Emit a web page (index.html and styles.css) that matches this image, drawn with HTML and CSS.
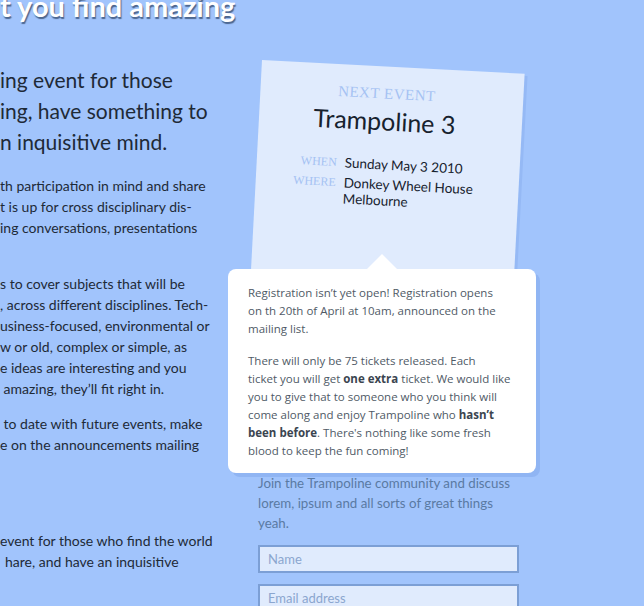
FILE: index.html
```html
<!DOCTYPE html>
<html lang="en">
<head>
<meta charset="utf-8">
<title>Trampoline</title>
<link rel="stylesheet" href="styles.css">
</head>
<body>
<div class="page">
  <main class="intro-col">
    <h1 class="title">t you find amazing</h1>
    <p class="lead">ing event for those<br>ing, have something to<br>n inquisitive mind.</p>
    <p class="body">th participation in mind and share<br>t is up for cross disciplinary dis-<br>ing conversations, presentations<br>&nbsp;</p>
    <p class="body">s to cover subjects that will be<br>, across different disciplines. Tech-<br>usiness-focused, environmental or<br>w or old, complex or simple, as<br>e ideas are interesting and you<br>&nbsp;amazing, they’ll fit right in.</p>
    <p class="body">&nbsp;to date with future events, make<br>e on the announcements mailing<br>&nbsp;</p>
    <p class="body section">event for those who find the world<br><span class="nudge">hare, and have an inquisitive</span></p>
  </main>
  <aside class="side-col">
    <section class="event-card">
      <div class="event-kicker">NEXT EVENT</div>
      <div class="event-name">Trampoline 3</div>
      <dl class="event-meta">
        <dt>WHEN</dt><dd>Sunday May 3 2010</dd>
        <dt>WHERE</dt><dd>Donkey Wheel House<br>Melbourne</dd>
      </dl>
    </section>
    <div class="popover">
      <p>Registration isn’t yet open! Registration opens<br>on th 20th of April at 10am, announced on the<br>mailing list.</p>
      <p>There will only be 75 tickets released. Each<br>ticket you will get <strong>one extra</strong> ticket. We would like<br>you to give that to someone who you think will<br>come along and enjoy Trampoline who <strong>hasn’t</strong><br><strong>been before</strong>. There's nothing like some fresh<br>blood to keep the fun coming!</p>
    </div>
    <div class="join">
      <p class="join-text">Join the Trampoline community and discuss lorem, ipsum and all sorts of great things yeah.</p>
      <input class="field" type="text" placeholder="Name">
      <input class="field" type="text" placeholder="Email address">
    </div>
  </aside>
</div>
</body>
</html>
```

FILE: styles.css
```css
html, body {
  margin: 0;
  padding: 0;
}
body {
  background: #a1c4fc;
  font-family: Lato, "Open Sans", sans-serif;
  color: #1e2a37;
  overflow: hidden;
}
.page {
  width: 644px;
  height: 606px;
  overflow: hidden;
  display: flex;
  align-items: flex-start;
}
.intro-col {
  width: 215px;
  flex: none;
  white-space: nowrap;
}
.title {
  margin: -10px 0 0 0;
  font-size: 29px;
  line-height: 32px;
  font-weight: 700;
  color: #ffffff;
  text-shadow: 1px 2px 1px rgba(20, 40, 70, 0.6);
}
.lead {
  margin: 42px 0 18px 0;
  font-size: 21px;
  line-height: 31px;
}
.body {
  margin: 0 0 14px 0;
  font-size: 14px;
  line-height: 21px;
}
.section {
  margin-top: 54px;
}
.nudge {
  padding-left: 5px;
}
.side-col {
  margin-left: 13px;
  width: 320px;
  flex: none;
}
.event-card {
  margin: 60px 0 0 34px;
  width: 263px;
  height: 225px;
  box-sizing: border-box;
  background: #e0ebfd;
  transform-origin: 0 0;
  transform: rotate(3deg);
  box-shadow: 3px 2px 0 #95b9f5;
  padding-top: 18px;
  text-align: center;
}
.event-kicker {
  font-family: "Liberation Serif", "DejaVu Serif", serif;
  font-size: 15px;
  line-height: 18px;
  letter-spacing: 0.5px;
  color: #a5c2f3;
  padding-right: 10px;
}
.event-name {
  font-size: 25px;
  line-height: 30px;
  color: #17222e;
  margin-top: 3px;
  padding-right: 12px;
}
.event-meta {
  margin: 19px 0 0 0;
  display: grid;
  grid-template-columns: 80px 1fr;
  column-gap: 8px;
  text-align: left;
}
.event-meta dt {
  font-family: "Liberation Serif", "DejaVu Serif", serif;
  font-size: 12px;
  line-height: 20px;
  color: #a5c2f3;
  text-align: right;
}
.event-meta dd {
  margin: 0;
  font-size: 13.5px;
  line-height: 16px;
  padding-top: 2px;
  padding-bottom: 2px;
  color: #17222e;
}
.popover {
  position: relative;
  margin-top: -16px;
  width: 308px;
  box-sizing: border-box;
  background: #ffffff;
  border-radius: 8px;
  box-shadow: 4px 4px 0 #90b5f3;
  padding: 15px 10px 13px 20px;
  color: #4f5a66;
  font-family: "Open Sans", Lato, sans-serif;
  font-size: 11.5px;
  line-height: 18px;
  white-space: nowrap;
}
.popover::before {
  content: "";
  position: absolute;
  top: -15px;
  left: 139px;
  border-left: 15px solid transparent;
  border-right: 15px solid transparent;
  border-bottom: 15px solid #ffffff;
}
.popover p {
  margin: 0 0 14px 0;
}
.popover p:last-child {
  margin-bottom: 0;
}
.popover strong {
  color: #3b4550;
}
.join {
  padding-left: 30px;
  width: 261px;
}
.join-text {
  margin: 0 0 12px 0;
  font-size: 13.3px;
  line-height: 20px;
  color: #5a7aa3;
}
.field {
  display: block;
  width: 261px;
  height: 28px;
  box-sizing: border-box;
  margin: 0 0 11px 0;
  border: 2px solid #7c9fd5;
  background: #e0ebfd;
  padding: 0 8px;
  font-family: Lato, "Open Sans", sans-serif;
  font-size: 13px;
  color: #1e2a37;
  outline: none;
}
.field::placeholder {
  color: #8ba6cf;
}
```
